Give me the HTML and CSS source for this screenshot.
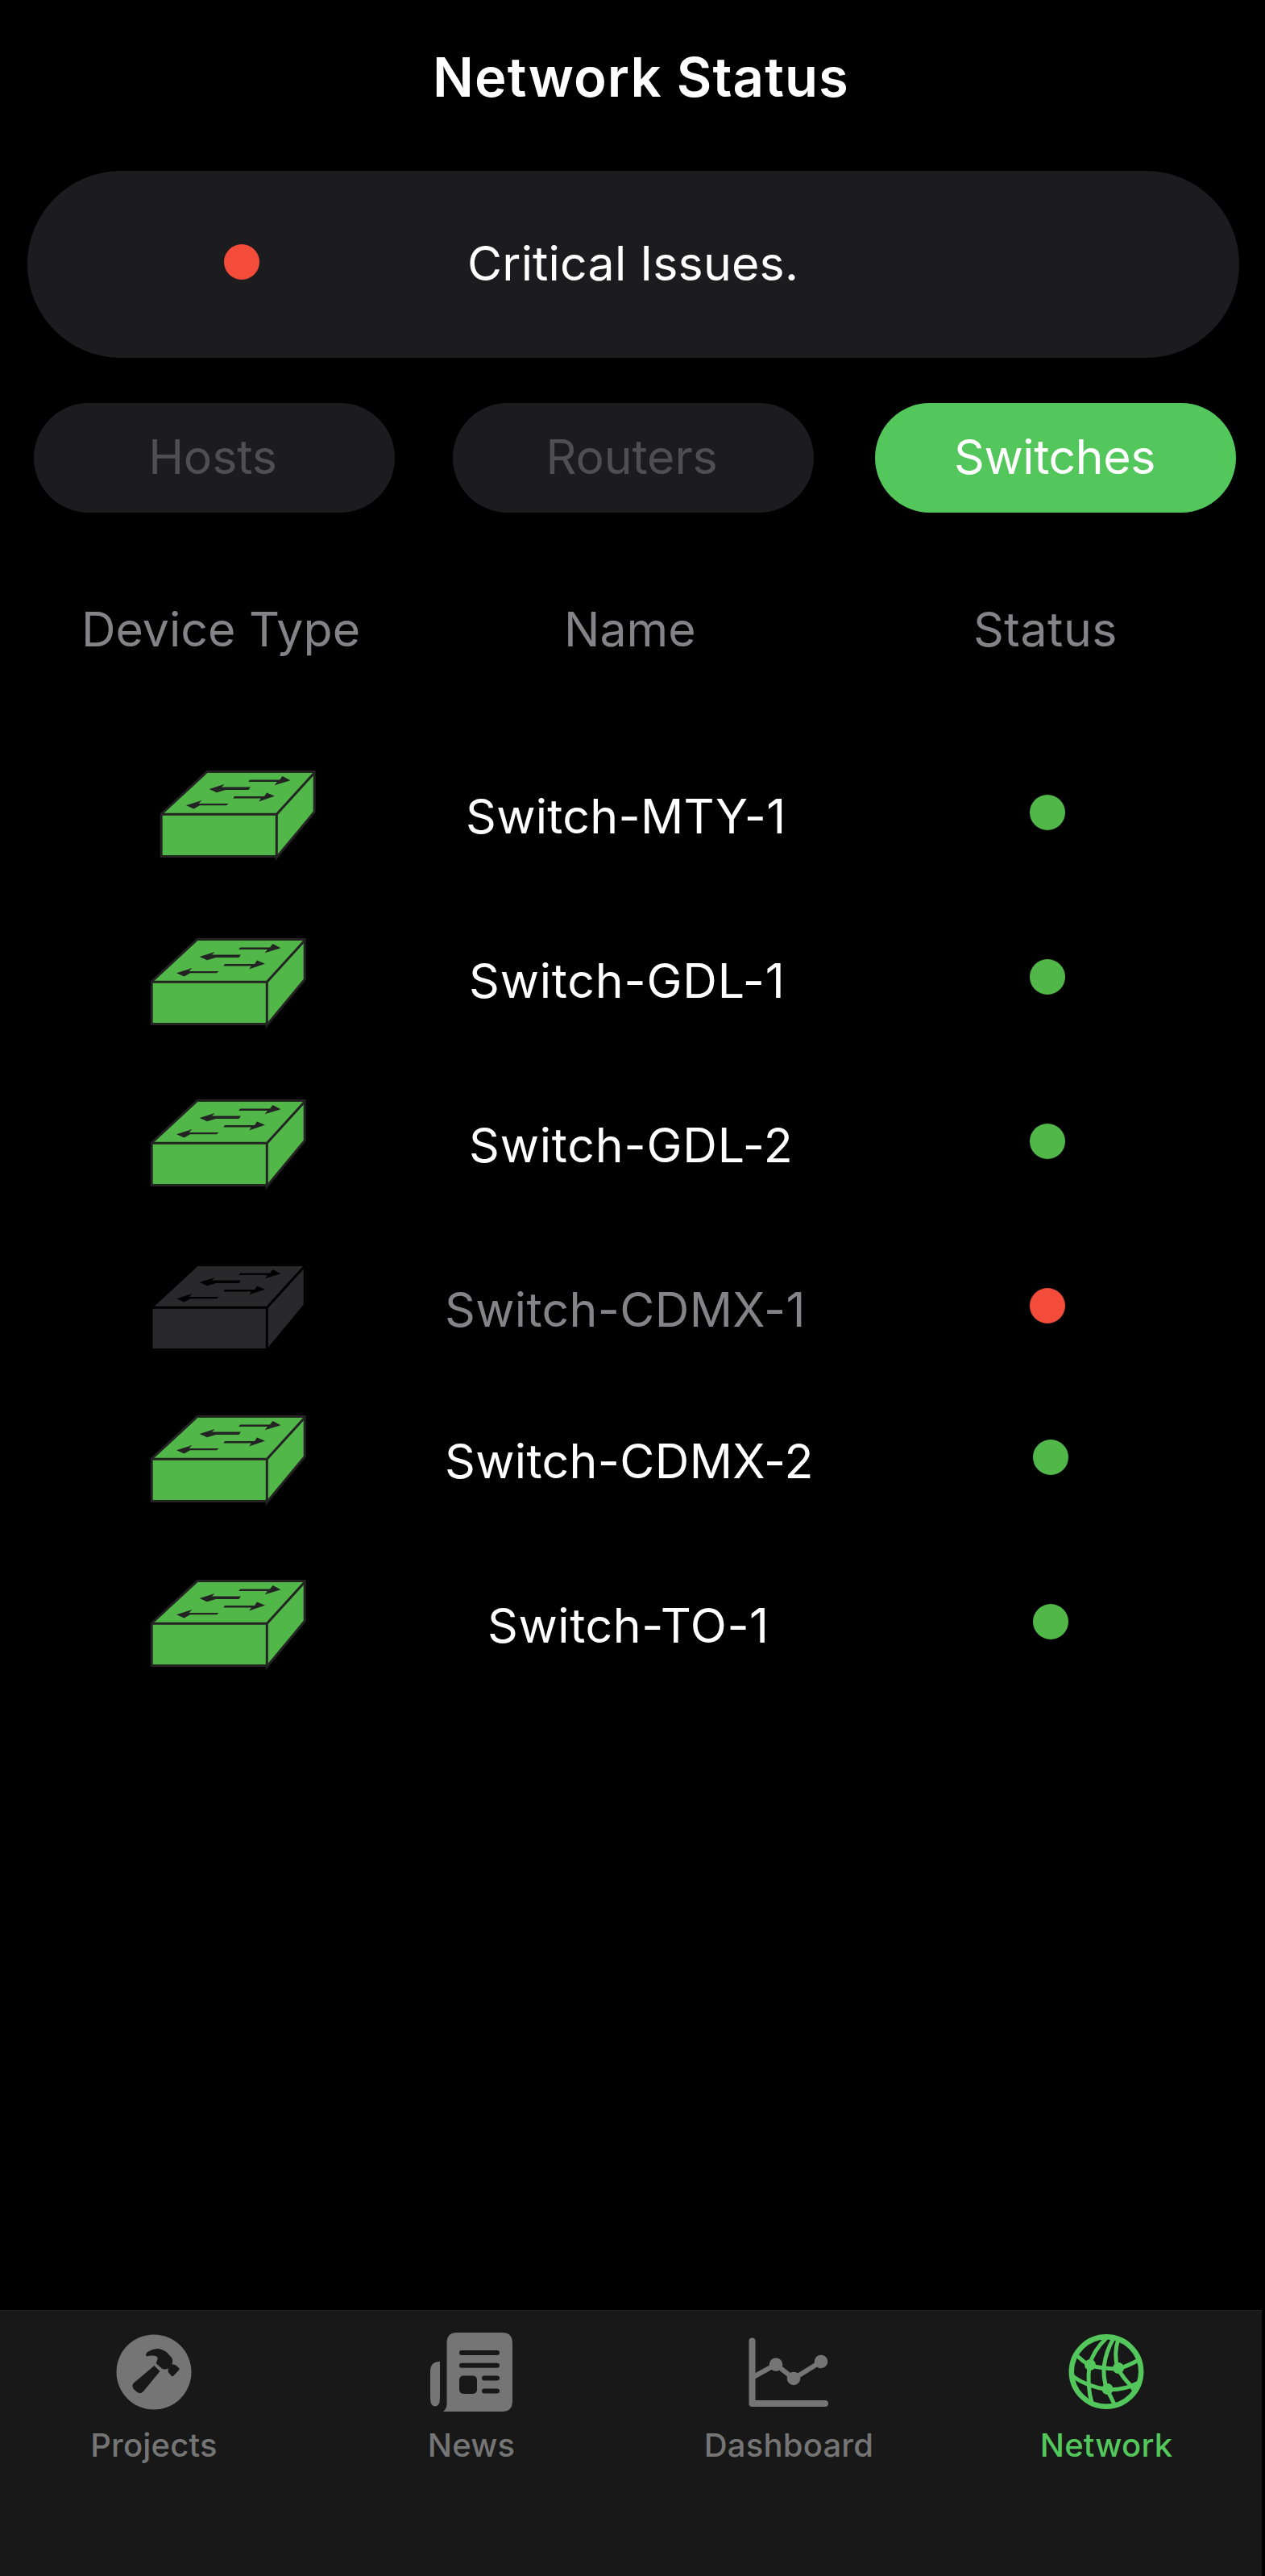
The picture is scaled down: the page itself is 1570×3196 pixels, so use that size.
FILE: index.html
```html
<!DOCTYPE html>
<html lang="en">
<head>
<meta charset="utf-8">
<title>Network Status</title>
<link rel="stylesheet" href="styles.css">
</head>
<body>
<svg class="sprite" width="0" height="0" aria-hidden="true">
  <symbol id="switch" viewBox="0 0 194 112">
    <path class="face" d="M59 1.7H192L147 54H3Z"/>
    <path class="face" d="M2.500 54H145V106H2.500Z"/>
    <path class="face" d="M145 54L192 1.700V51L145 108Z"/>
    <path class="inner" d="M2 54.300H145.300L192 3M145.300 54V108"/>
    <path class="outer" d="M2.200 54L59 1.500H192.200V51.300L145.300 107.800V106.500H2.200Z"/>
    <path class="arrow" d="M112 11.500L110.300 14H146L142.700 18.300L162.500 12.200L152.500 7L149 11.500ZM113 20.500L110.500 24H82L71 27.300L61.500 23L80.500 17L77 20.500ZM93 32L91.300 34.500H126L123 38.500L143 31.800L133 27.500L130 32ZM85.500 41L83 43.300H50L42.500 47.500L33 43.200L52.500 37L48.500 41Z"/>
  </symbol>
</svg>
<main class="screen">
  <h1 class="title">Network Status</h1>
  <section class="alert"><i class="dot bad"></i><span class="alert-text">Critical Issues.</span></section>
  <nav class="tabs">
    <button class="tab">Hosts</button>
    <button class="tab">Routers</button>
    <button class="tab active">Switches</button>
  </nav>
  <header class="head"><span>Device Type</span><span>Name</span><span class="head-status">Status</span></header>
  <ul class="list">
    <li class="row first"><svg class="device"><use href="#switch"/></svg><span class="name">Switch-MTY-1</span><i class="dot"></i></li>
    <li class="row gdl second"><svg class="device"><use href="#switch"/></svg><span class="name">Switch-GDL-1</span><i class="dot"></i></li>
    <li class="row gdl"><svg class="device"><use href="#switch"/></svg><span class="name">Switch-GDL-2</span><i class="dot"></i></li>
    <li class="row cdmx down"><svg class="device"><use href="#switch"/></svg><span class="name">Switch-CDMX-1</span><i class="dot bad"></i></li>
    <li class="row cdmx late"><svg class="device"><use href="#switch"/></svg><span class="name">Switch-CDMX-2</span><i class="dot"></i></li>
    <li class="row to late"><svg class="device"><use href="#switch"/></svg><span class="name">Switch-TO-1</span><i class="dot"></i></li>
  </ul>
  <footer class="bar">
    <a class="item"><svg class="icon" viewBox="0 0 120 110">
      <circle cx="60" cy="53" r="46.500" fill="currentColor"/>
      <g class="cut"><path d="M60.500 45L67.500 52L47 77Q42 82 37 76Q31 71 35 66.500Z"/><path d="M50.500 33Q49 30 53 27.500Q65 20 76 28.500L82 35Q84 38 82.500 43.500Q86 43 88 45L91.500 48.500Q92 49.500 91 50.500L84.500 57.500Q83 59 81.500 57.500L78 53.500Q77 51 78 48.500Q74 50 70.500 49L63 42.500Q62.500 41 64 38.500Q66 34 62 33Q57 32 51.500 33.500Z"/></g></svg><span>Projects</span></a>
    <a class="item"><svg class="icon" viewBox="0 0 120 110">
      <path fill="currentColor" d="M21 40V85Q21 95.500 15 95.500Q9 95.500 9 85V52Q9 40 21 40ZM29.500 16Q30 4 42 4H98Q111 4 111 17V89Q111 102 98 102H25Q29 99 29.500 93Z"/>
      <path class="gap" d="M48 29H92M48 44.700H92M76 60.500H92M76 76.500H92"/><rect class="cut" x="45" y="57.500" width="22" height="22.500" rx="5"/></svg><span>News</span></a>
    <a class="item"><svg class="icon" viewBox="0 0 120 110">
      <path class="axis" d="M14.500 14.500V92H105"/><path class="trend" d="M16 59L44 43.700L66 61L100 40"/><g fill="currentColor"><circle cx="44" cy="43.700" r="8.300"/><circle cx="66" cy="61" r="8.300"/><circle cx="100" cy="40" r="8.300"/></g></svg><span>Dashboard</span></a>
    <a class="item on"><svg class="icon" viewBox="0 0 120 110">
      <circle class="ring" cx="60" cy="52.500" r="43.200"/>
      <path class="mesh" d="M24 33Q31 40 40 45Q58 49 74 49Q86 46 100 38M60 11Q44 26 39 45Q36 70 42 91M69 11Q50 45 61 75Q66 84 71 95M75 12Q69 30 74 48Q82 62 91 70M18 58Q36 71 61 74.500Q80 76 99 67"/><g fill="currentColor"><circle cx="40" cy="44" r="7"/><circle cx="75" cy="48" r="7"/><circle cx="61.500" cy="74" r="7"/><path d="M88 69L101 63L92 77Z"/></g></svg><span>Network</span></a>
  </footer>
</main>
</body>
</html>
```
FILE: styles.css
```css
* { box-sizing: border-box; }
body { margin: 0; background: #000; color: #fff; font-family: Inter, sans-serif; }
.sprite { display: block; height: 0; }
.screen { width: 1570px; height: 3196px; display: flex; flex-direction: column; overflow: hidden; white-space: nowrap; font-size: 59px; }
.title { margin: 0; height: 212px; padding: 55px 0 0 537px; font-size: 67px; line-height: 82px; font-weight: 600; letter-spacing: 1.1px; }
.alert { margin: 0 32px 0 34px; height: 232px; border-radius: 116px; background: #1c1c1e; display: flex; align-items: center; padding-left: 244px; }
.alert .dot { margin-bottom: 7px; }
.alert-text { margin: 0 0 3px 258px; letter-spacing: 0.2px; }
.dot { width: 44px; height: 44px; border-radius: 50%; background: #50b748; flex: none; }
.dot.bad { background: #f44c3b; }
.tabs { height: 136px; margin: 56px 36px 0 42px; display: flex; gap: 72px; }
.tab { width: 448px; padding: 0 4px 4px 0; border: 0; border-radius: 68px; background: #1c1c1e; color: #4f4f52; font: inherit; letter-spacing: -0.1px; }
.tab.active { margin-left: 4px; padding-right: 2px; background: #53c65c; color: #fff; letter-spacing: -0.4px; }
.head { height: 72px; margin-top: 109px; display: grid; grid-template-columns: 599px 508px 1fr; padding-left: 101px; line-height: 72px; color: #848388; }
.head-status { letter-spacing: 0.5px; }
.list { list-style: none; margin: 0; padding: 83px 0 0; }
.row { height: 204px; display: grid; grid-template-columns: 578px 700px 44px; align-items: start; }
.row .dot { margin-top: 86px; }
.name { line-height: 72px; margin-top: 77px; letter-spacing: 0.3px; }
.gdl .name { margin-left: 4px; letter-spacing: 0.8px; }
.cdmx .name { margin-left: -26px; letter-spacing: 0.35px; }
.to .name { margin-left: 27px; letter-spacing: 0.6px; }
.device { display: block; width: 194px; height: 112px; margin: 56px 0 0 186px; overflow: visible; fill: #50b748; color: #232323; }
.first .device { margin-left: 198px; }
.second .device { margin-top: 60px; }
.down { height: 188px; color: #848388; }
.down .device { fill: #29292b; color: #000; }
.late { grid-template-columns: 578px 704px 44px; }
.inner, .outer { fill: none; stroke: currentColor; stroke-width: 3; }
.arrow { fill: currentColor; }
.bar { margin-top: auto; width: 1566px; height: 330px; background: #181818; border-top: 1px solid #252525; color: #757575; display: grid; grid-template-columns: repeat(4, 394px); overflow: hidden; }
.bar .item { width: 394px; margin-left: -6px; display: flex; flex-direction: column; align-items: center; padding-top: 23px; font-size: 40px; font-weight: 500; line-height: 50px; letter-spacing: 0.2px; }
.bar .item.on { color: #53c65c; }
.icon { width: 120px; height: 110px; display: block; margin-bottom: 9px; }
.cut { fill: #181818; }
.gap { stroke: #181818; stroke-width: 6; stroke-linecap: round; }
.axis { fill: none; stroke: currentColor; stroke-width: 8; stroke-linecap: round; stroke-linejoin: round; }
.trend { fill: none; stroke: currentColor; stroke-width: 6; }
.ring { fill: none; stroke: currentColor; stroke-width: 6.500; }
.mesh { fill: none; stroke: currentColor; stroke-width: 5; }
```
